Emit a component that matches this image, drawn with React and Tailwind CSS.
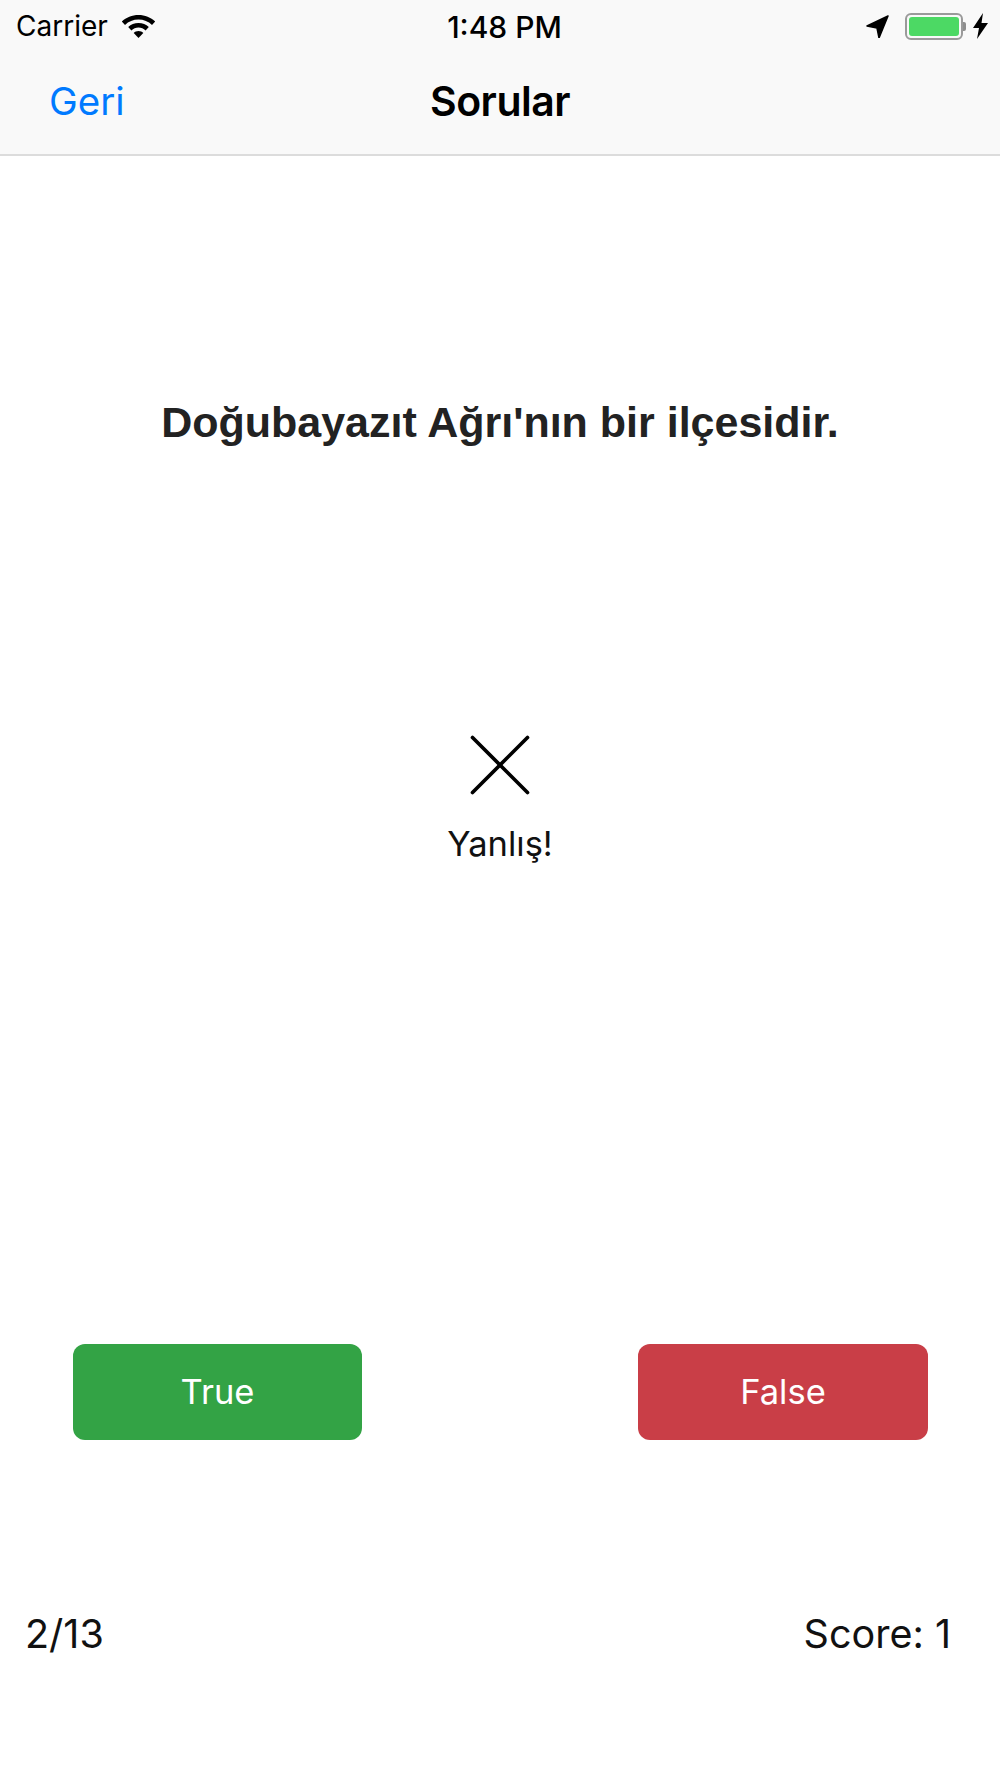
import React from 'react';
import { X } from 'lucide-react';

const Wifi = () => (
  <svg width="35" height="25" viewBox="0 0 35 25" fill="currentColor">
    <path d="M17.5 1C11 1 5.2 3.4 .8 7.6l3.2 3.4C7.6 7.6 12.3 5.6 17.5 5.6S27.4 7.6 31 11l3.2-3.4C29.8 3.4 24 1 17.5 1z" />
    <path d="M17.5 9c-4 0-7.6 1.500-10.300 4.100l3.200 3.400c1.900-1.800 4.400-2.900 7.100-2.900s5.200 1.100 7.100 2.900l3.200-3.400C25.100 10.500 21.500 9 17.500 9z" />
    <path d="M17.500 17c-1.900 0-3.500.7-4.800 1.900l4.800 5.100 4.800-5.100c-1.300-1.200-2.900-1.900-4.800-1.900z" />
  </svg>
);

const Battery = () => (
  <div className="flex items-center">
    <div className="w-[58px] h-[27px] rounded-[6px] border-[2px] border-[#9a9a9a] p-[2px]">
      <div className="w-full h-full rounded-[3px] bg-[#4cd964]" />
    </div>
    <div className="w-[3px] h-[9px] bg-[#8e8e8e] rounded-r-[2px]" />
  </div>
);

function App() {
  return (
    <div className="w-[1000px] h-[1778px] bg-white flex flex-col font-['Inter','Liberation_Sans',sans-serif] text-black">
      <header className="h-[156px] shrink-0 bg-[#f9f9f9] border-b-2 border-[#dcdcdc] flex flex-col">
        <div className="h-[52px] shrink-0 grid grid-cols-3 items-center pl-[16px] pr-[12px]">
          <div className="flex items-center gap-[13px]">
            <span className="text-[28px] leading-none">Carrier</span>
            <Wifi />
          </div>
          <div className="text-[30px] font-medium leading-none text-center pl-[5px] pt-[2px]">1:48 PM</div>
          <div className="flex items-center justify-end gap-[16px]">
            <svg width="23" height="23" viewBox="0 0 23 23" fill="currentColor">
              <path d="M22 1 L1 11 L11 13 L13 23 Z" strokeLinejoin="round" stroke="currentColor" strokeWidth="1.500" />
            </svg>
            <div className="flex items-center gap-[7px]">
              <Battery />
              <svg width="15" height="26" viewBox="0 0 15 26" fill="currentColor">
                <path d="M10 0 L0 15 H6 L4 26 L15 10 H8.500 Z" />
              </svg>
            </div>
          </div>
        </div>
        <div className="flex-1 relative flex items-center justify-center pb-[4px]">
          <span className="absolute left-[49px] text-[38.500px] leading-none text-[#007aff]">Geri</span>
          <span className="text-[41px] leading-none font-semibold tracking-[-0.5px]">Sorular</span>
        </div>
      </header>

      <main className="flex-1 flex flex-col items-center">
        <h1 className="mt-[241px] text-[43px] leading-[50px] font-bold text-[#222222] font-['Liberation_Sans',sans-serif]">
          Doğubayazıt Ağrı'nın bir ilçesidir.
        </h1>
        <div className="mt-[263px] flex flex-col items-center">
          <X size={110} strokeWidth={0.800} strokeLinecap="round" className="text-black" />
          <div className="mt-[2px] text-[34.500px] leading-[44px] text-[#111111]">Yanlış!</div>
        </div>
        <div className="mt-[478px] w-full pl-[73px] pr-[72px] flex justify-between">
          <button className="w-[289px] h-[96px] rounded-[12px] bg-[#33a345] text-white text-[34.500px]">True</button>
          <button className="w-[290px] h-[96px] rounded-[12px] bg-[#c93e47] text-white text-[34.500px]">False</button>
        </div>
        <div className="mt-[170px] w-full pl-[25px] pr-[49px] flex justify-between text-[39.500px] leading-[48px] text-[#111111]">
          <span>2/13</span>
          <span>Score: 1</span>
        </div>
      </main>
    </div>
  );
}

export default App;
